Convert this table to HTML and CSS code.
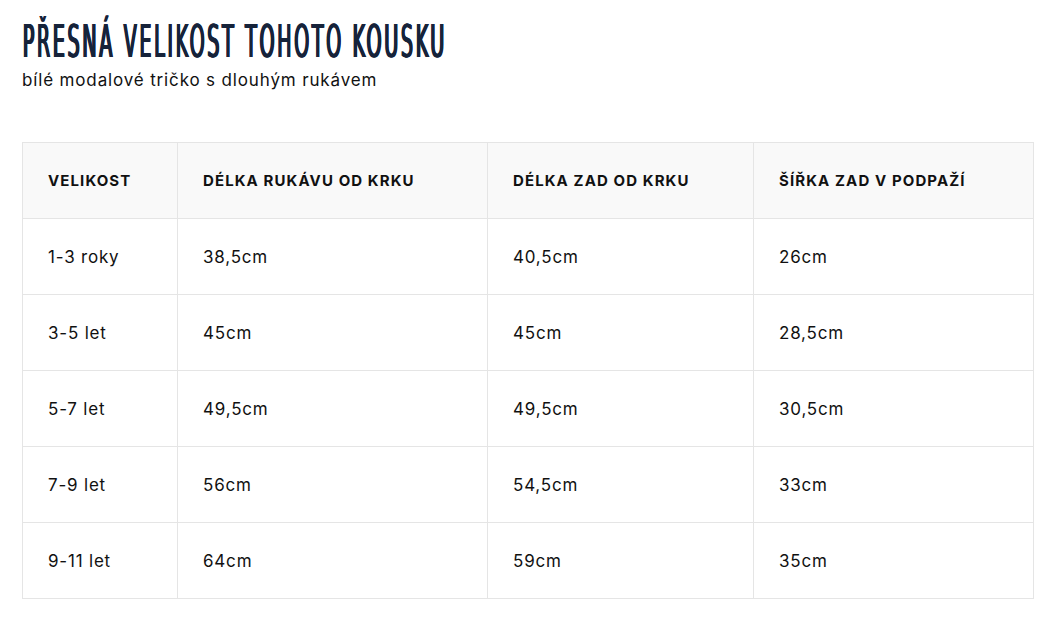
FILE: index.html
```html
<!DOCTYPE html>
<html lang="cs">
<head>
<meta charset="utf-8">
<title>Přesná velikost</title>
<link rel="stylesheet" href="styles.css">
</head>
<body>
<div class="page">
  <h1 class="title"><span class="title-text">PŘESNÁ VELIKOST TOHOTO KOUSKU</span></h1>
  <p class="subtitle">bílé modalové tričko s dlouhým rukávem</p>
  <table class="sizes">
    <colgroup>
      <col class="c1"><col class="c2"><col class="c3"><col class="c4">
    </colgroup>
    <thead>
      <tr><th>VELIKOST</th><th>DÉLKA RUKÁVU OD KRKU</th><th>DÉLKA ZAD OD KRKU</th><th>ŠÍŘKA ZAD V PODPAŽÍ</th></tr>
    </thead>
    <tbody>
      <tr><td>1-3 roky</td><td>38,5cm</td><td>40,5cm</td><td>26cm</td></tr>
      <tr><td>3-5 let</td><td>45cm</td><td>45cm</td><td>28,5cm</td></tr>
      <tr><td>5-7 let</td><td>49,5cm</td><td>49,5cm</td><td>30,5cm</td></tr>
      <tr><td>7-9 let</td><td>56cm</td><td>54,5cm</td><td>33cm</td></tr>
      <tr><td>9-11 let</td><td>64cm</td><td>59cm</td><td>35cm</td></tr>
    </tbody>
  </table>
</div>
</body>
</html>
```

FILE: styles.css
```css
html, body {
  margin: 0;
  padding: 0;
  background: #ffffff;
}
.page {
  padding: 16px 30px 0 22px;
  font-family: "Inter", "Liberation Sans", sans-serif;
  color: #111111;
}
.title {
  margin: 0;
  font-family: "DejaVu Sans Condensed", "DejaVu Sans", sans-serif;
  font-weight: 400;
  font-size: 45px;
  line-height: 52px;
  letter-spacing: 5.5px;
  color: #16233a;
  white-space: nowrap;
}
.title-text {
  display: inline-block;
  transform: scaleX(0.4736);
  transform-origin: left center;
  text-shadow: 1px 0 0 #16233a, 2px 0 0 #16233a, 3px 0 0 #16233a;
}
.subtitle {
  margin: 0;
  font-size: 17px;
  line-height: 24px;
  letter-spacing: 0.85px;
  color: #111111;
}
.sizes {
  margin-top: 50px;
  width: 1011px;
  border-collapse: collapse;
  table-layout: fixed;
  font-size: 17px;
  letter-spacing: 0.8px;
}
.c1 { width: 155px; }
.c2 { width: 310px; }
.c3 { width: 266px; }
.c4 { width: 280px; }
.sizes th, .sizes td {
  border: 1px solid #e5e5e5;
  height: 75px;
  padding: 0 0 0 25px;
  text-align: left;
  vertical-align: middle;
}
.sizes th {
  background: #f9f9f9;
  font-weight: 700;
  font-size: 15px;
  letter-spacing: 1.1px;
  color: #111111;
}
.sizes td {
  font-weight: 400;
  color: #111111;
}
```
